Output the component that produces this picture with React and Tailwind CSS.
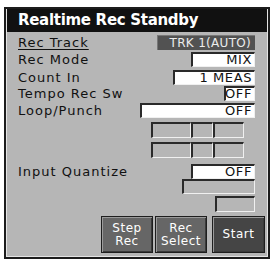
import React from 'react';

// Inset value field: dark top/left edge, light bottom/right edge
function Field({ w, value, fill = 'bg-white' }) {
  return (
    <div
      className={`${w} h-full ${fill} border-t-2 border-l-2 border-b border-r border-t-[#2a2a2a] border-l-[#2a2a2a] border-b-[#f0f0f0] border-r-[#f0f0f0] flex items-center justify-end pr-[2px] text-[#111] whitespace-nowrap tracking-[0.6px]`}
    >
      {value}
    </div>
  );
}

function Row({ mt, label, underline, children }) {
  return (
    <div className={`${mt} h-[15px] flex items-center pl-[11px] pr-[12px]`}>
      <span className={`text-[#111] whitespace-nowrap ${underline ? 'underline underline-offset-2 decoration-1' : ''}`}>{label}</span>
      <div className="flex-1" />
      {children}
    </div>
  );
}

function Key({ lines, dark }) {
  return (
    <div
      className={`h-full ${dark ? 'w-[53px] bg-[#454545]' : 'w-[52px] bg-[#666]'} border border-[#1e1e1e] shadow-[inset_1px_1px_0_#9a9a9a,inset_-1px_-1px_0_#3a3a3a] flex flex-col items-center justify-center text-white text-[12px] tracking-[0.5px] leading-[13px]`}
    >
      {lines.map((l) => (
        <span key={l} className="whitespace-nowrap">{l}</span>
      ))}
    </div>
  );
}

export default function App() {
  return (
    <div
      className="w-[271px] h-[259px] bg-white pt-[7px] pl-[4px] pr-[1px] overflow-hidden text-[13px] tracking-[1px]"
      style={{ fontFamily: '"DejaVu Sans", sans-serif' }}
    >
      <div className="h-[252px] border-2 border-[#1c1c1c]">
        <div className="h-full bg-[#b6b6b6] border-l border-b border-r border-[#e4e4e4] flex flex-col">
          {/* title bar */}
          <div className="h-[23px] bg-[#111] flex items-center pl-[11px] text-white font-bold text-[15px] tracking-[-0.3px] whitespace-nowrap">
            Realtime Rec Standby
          </div>

          <Row mt="mt-[3px]" label="Rec Track" underline>
            <div className="w-[98px] h-full bg-[#525252] border-t border-l border-[#777] flex items-center justify-end pr-[4px] text-[#ececec] text-[12px] tracking-[0.3px] whitespace-nowrap">
              TRK 1(AUTO)
            </div>
          </Row>
          <Row mt="mt-[2px]" label="Rec Mode">
            <Field w="w-[64px]" value="MIX" />
          </Row>
          <Row mt="mt-[3px]" label="Count In">
            <Field w="w-[82px]" value="1 MEAS" />
          </Row>
          <Row mt="mt-[1px]" label="Tempo Rec Sw">
            <Field w="w-[31px]" value="OFF" />
          </Row>
          <Row mt="mt-[2px]" label="Loop/Punch">
            <Field w="w-[115px]" value="OFF" />
          </Row>

          {/* empty locator fields */}
          <div className="mt-[4px] h-[16px] flex justify-end pr-[23px]">
            <Field w="w-[40px]" fill="bg-[#b6b6b6]" value="" />
            <Field w="w-[22px]" fill="bg-[#b6b6b6]" value="" />
            <Field w="w-[31px]" fill="bg-[#b6b6b6]" value="" />
          </div>
          <div className="mt-[4px] h-[16px] flex justify-end pr-[23px]">
            <Field w="w-[40px]" fill="bg-[#b6b6b6]" value="" />
            <Field w="w-[22px]" fill="bg-[#b6b6b6]" value="" />
            <Field w="w-[31px]" fill="bg-[#b6b6b6]" value="" />
          </div>

          <Row mt="mt-[6px]" label="Input Quantize">
            <Field w="w-[64px]" value="OFF" />
          </Row>
          <div className="h-[15px] flex justify-end pr-[12px]">
            <Field w="w-[73px]" fill="bg-[#b6b6b6]" value="" />
          </div>
          <div className="mt-[2px] h-[16px] flex justify-end pr-[12px]">
            <Field w="w-[40px]" fill="bg-[#b6b6b6]" value="" />
          </div>

          {/* function keys */}
          <div className="mt-[4px] h-[37px] flex justify-end gap-[2px] pr-[2px]">
            <Key lines={['Step', 'Rec']} />
            <Key lines={['Rec', 'Select']} />
            <div className="w-[1px]" />
            <Key lines={['Start']} dark />
          </div>
        </div>
      </div>
    </div>
  );
}
